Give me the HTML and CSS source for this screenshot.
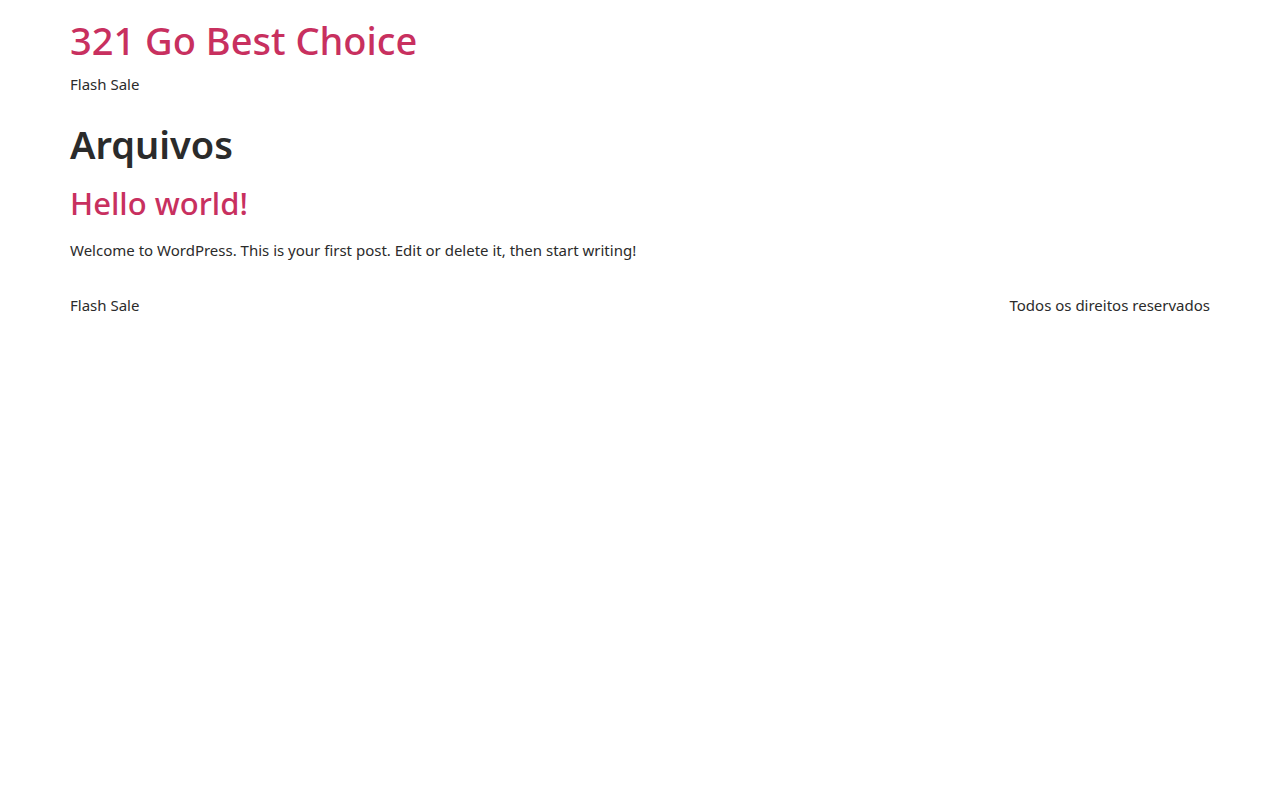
FILE: index.html
```html
<!DOCTYPE html>
<html lang="pt-BR">
<head>
<meta charset="utf-8">
<title>Arquivos - 321 Go Best Choice</title>
<link rel="stylesheet" href="styles.css">
</head>
<body>
<div class="container">
  <header class="site-header">
    <h1 class="site-title"><a href="#">321 Go Best Choice</a></h1>
    <p class="site-desc">Flash Sale</p>
  </header>
  <main class="site-main">
    <h1 class="page-title">Arquivos</h1>
    <article class="post">
      <h2 class="post-title"><a href="#">Hello world!</a></h2>
      <p class="post-excerpt">Welcome to WordPress. This is your first post. Edit or delete it, then start writing!</p>
    </article>
  </main>
  <footer class="site-footer">
    <span>Flash Sale</span>
    <span>Todos os direitos reservados</span>
  </footer>
</div>
</body>
</html>
```
FILE: styles.css
```css
* { box-sizing: border-box; }
html, body { margin: 0; padding: 0; background: #fff; }
body {
  font-family: "Noto Sans", "Open Sans", "DejaVu Sans", sans-serif;
  font-size: 15px;
  line-height: 1.5;
  color: #2b2b2b;
}
a { color: #c8305f; text-decoration: none; }
.container {
  width: 1140px;
  margin: 0 auto;
  padding-top: 16px;
}
.site-title {
  margin: 0;
  font-size: 38px;
  font-weight: 500;
  line-height: 1.3;
}
.site-desc { margin: 8px 0 0; }
.site-main { margin-top: 24px; }
.page-title {
  margin: 0;
  font-size: 38px;
  font-weight: 600;
  line-height: 1.3;
}
.post-title {
  margin: 14px 0 0;
  font-size: 31px;
  font-weight: 500;
  line-height: 1.3;
}
.post-excerpt { margin: 15px 0 0; }
.site-footer {
  display: flex;
  justify-content: space-between;
  margin-top: 33px;
}
```
